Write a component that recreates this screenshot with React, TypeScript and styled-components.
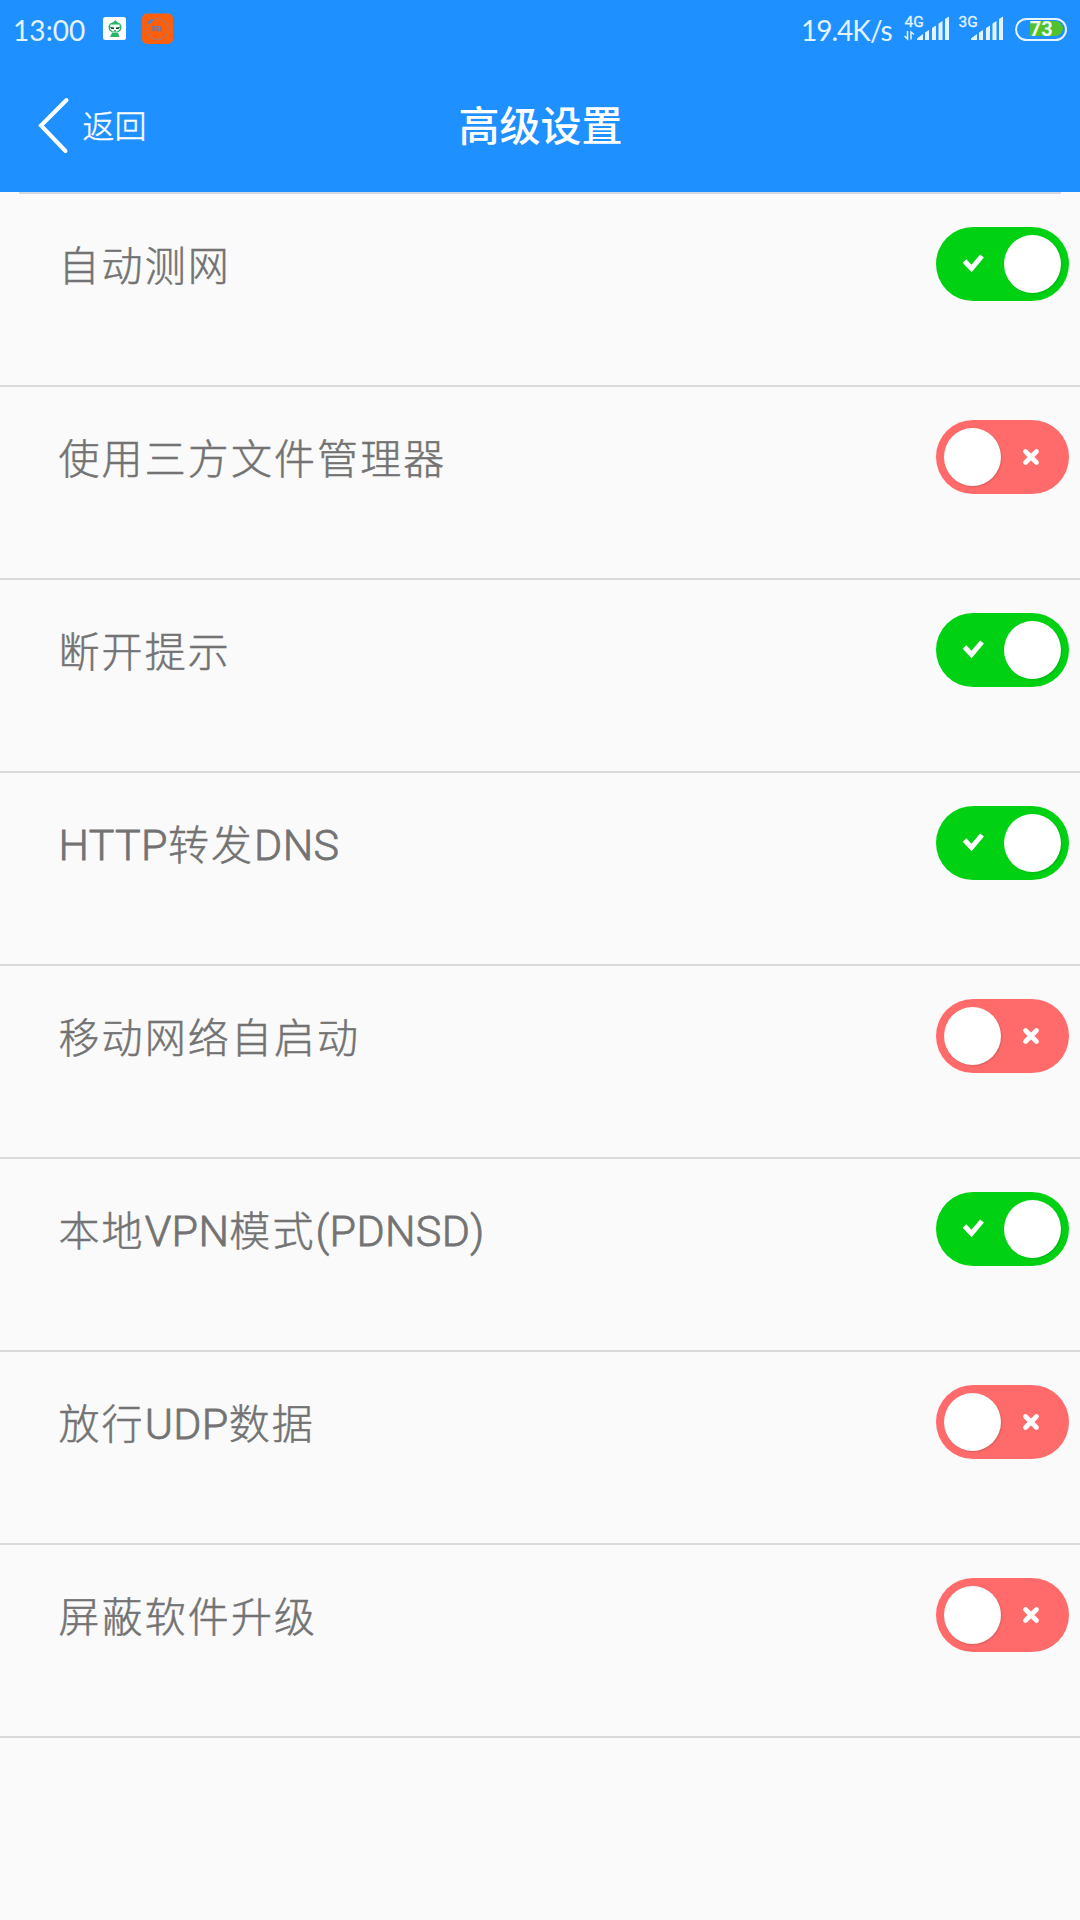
import React, { useState } from "react";
import styled, { createGlobalStyle } from "styled-components";

const GlobalStyle = createGlobalStyle`
  * { box-sizing: border-box; }
  body {
    margin: 0;
    background: #fafafa;
    font-family: Roboto, "Noto Sans CJK SC", sans-serif;
  }
`;

const Screen = styled.div`
  width: 1080px;
  height: 1920px;
  display: flex;
  flex-direction: column;
  background: #fafafa;
  overflow: hidden;
`;

const TopArea = styled.header`
  height: 192px;
  background: #1f90ff;
  color: #fff;
`;

const StatusBar = styled.div`
  height: 60px;
  display: flex;
  justify-content: space-between;
  padding: 0 13px;
`;

const StatusGroup = styled.div`
  display: flex;
  align-items: flex-start;
`;

const AppIcons = styled(StatusGroup)`
  gap: 15px;
`;

const Clock = styled.span`
  width: 75px;
  padding-top: 13px;
  font: 400 28px/34px Lato, sans-serif;
  letter-spacing: 0.1px;
  color: #e3f3ff;
  white-space: nowrap;
`;

const Speed = styled(Clock)`
  width: 103px;
  letter-spacing: -1px;
`;

const StatusIcon = styled.svg`
  display: block;
  flex: none;
`;

const BatteryIcon = styled(StatusIcon)`
  margin-left: 3px;
`;

const NavBar = styled.nav`
  height: 132px;
  display: grid;
  grid-template-columns: 1fr auto 1fr;
  align-items: start;
`;

const BackButton = styled.button`
  display: flex;
  align-items: flex-start;
  padding: 34px 0 0 36px;
  border: 0;
  background: none;
  color: #fff;
  text-align: left;
`;

const BackLabel = styled.span`
  padding: 10px 0 0 12.5px;
  font: 300 32px/40px "Noto Sans CJK SC", sans-serif;
  -webkit-text-stroke: 0.4px currentColor;
`;

const Title = styled.h1`
  margin: 0;
  padding: 36px 0 0 1px;
  font: 500 41px/54px "Noto Sans CJK SC", sans-serif;
`;

const HeaderRule = styled.hr`
  flex: none;
  width: 1042px;
  height: 2px;
  margin: 0 auto;
  border: 0;
  background: #d2d9e2;
`;

const List = styled.ul`
  margin: 0;
  padding: 0;
  list-style: none;
`;

const Row = styled.li`
  height: 193px;
  display: flex;
  justify-content: space-between;
  align-items: flex-start;
  padding: 33px 11px 0 58.5px;
  border-bottom: 2px solid #dadada;
`;

const Label = styled.div`
  padding-top: 9px;
  font: 300 43px/60px Roboto, sans-serif;
  color: #737373;
  white-space: pre;
`;

const Run = styled.span<{ $han: boolean }>`
  font-family: ${(p) => (p.$han ? '"Noto Sans CJK SC"' : "Roboto")}, sans-serif;
  font-size: ${(p) => (p.$han ? 41 : 43)}px;
  line-height: 1;
  letter-spacing: ${(p) => (p.$han ? 2.1 : 0.35)}px;
  -webkit-text-stroke: ${(p) => (p.$han ? 0.5 : 0.8)}px currentColor;
`;

const Toggle = styled.button<{ $on: boolean }>`
  width: 133px;
  height: 74px;
  display: flex;
  flex-direction: ${(p) => (p.$on ? "row" : "row-reverse")};
  align-items: center;
  justify-content: space-between;
  padding: ${(p) => (p.$on ? "0 8px 0 26px" : "0 29px 0 8px")};
  border: 0;
  border-radius: 37px;
  background: ${(p) => (p.$on ? "#00d213" : "#ff6b6b")};
`;

const Knob = styled.span`
  width: 57px;
  height: 58px;
  border-radius: 50%;
  background: #fff;
  box-shadow: 1px 1px 2px rgba(0, 0, 0, 0.14);
`;

const settings = [
  { text: "自动测网", on: true },
  { text: "使用三方文件管理器", on: false },
  { text: "断开提示", on: true },
  { text: "HTTP转发DNS", on: true },
  { text: "移动网络自启动", on: false },
  { text: "本地VPN模式(PDNSD)", on: true },
  { text: "放行UDP数据", on: false },
  { text: "屏蔽软件升级", on: false },
];

const Check = () => (
  <svg width="24" height="24" viewBox="0 0 24 24" fill="none">
    <path d="M2.500 9 L9.500 16.500 L20 4" stroke="#fff" strokeWidth="5" />
  </svg>
);

const Cross = () => (
  <svg width="18" height="18" viewBox="0 0 18 18" fill="none">
    <path d="M3.500 3.500 L14.500 14.500 M14.500 3.500 L3.500 14.500" stroke="#fff" strokeWidth="4.700" strokeLinecap="round" />
  </svg>
);

const GhostApp = () => (
  <StatusIcon width="24" height="60" viewBox="0 0 24 60">
    <rect x="0" y="17" width="23" height="23" rx="2.500" fill="#fff" />
    <path d="M12.500 20 L14 22 L17 23.500 L18.500 26 L18 30 L15 32.500 H9 L6 30 L5.500 26 L7 23.500 L10.500 22 Z" fill="#25b66a" />
    <path d="M7.500 24.500 H16.500 L17 29 L14.500 31.500 H9.500 L7 29 Z" fill="#eefff4" />
    <path d="M7 27 L11 27.500 V29 H8.500 Z M17 27 L13 27.500 V29 H15.500 Z M11.500 30 H12.500 V31.500 H11.500 Z" fill="#153d2b" />
    <path d="M9 33 H15 L16.500 37 H7 Z" fill="#25b66a" />
  </StatusIcon>
);

const OrangeApp = () => (
  <StatusIcon width="32" height="60" viewBox="0 0 32 60">
    <rect x="0" y="13.500" width="31" height="30.500" rx="5" fill="#ff5f0a" />
    <circle cx="15.500" cy="29" r="10.500" fill="none" stroke="#a77774" strokeWidth="1.300" strokeDasharray="3 1.200" />
    <path d="M6 23.500 L10.500 19.500" stroke="#5d82bd" strokeWidth="3" />
    <path d="M11 26 V31.500 M13.500 26 V31.500 M16 26 V31.500 M19 26 V31.500" stroke="#75789c" strokeWidth="1.700" />
    <path d="M10.500 26.500 H17 M10.500 29 H17" stroke="#75789c" strokeWidth="1" />
  </StatusIcon>
);

const Signal = ({ name, arrows }: { name: string; arrows?: boolean }) => (
  <StatusIcon width="54" height="60" viewBox="0 0 54 60" fill="#e3f3ff">
    <text x="0.500" y="26.500" fontFamily="Roboto, sans-serif" fontSize="15.500" fontWeight="400" stroke="#e3f3ff" strokeWidth="0.300">
      {name}
    </text>
    <path d="M13 40 V38.500 L19 34 V40 Z" />
    <path d="M21 32.500 L25 30 V40 H21 Z M28 28 L32 25.500 V40 H28 Z M34.500 23.500 L38.500 21 V40 H34.500 Z M41 19 L45 16.500 V40 H41 Z" />
    {arrows && (
      <path d="M3.500 31 V39 L0.500 36 M7 39.500 V32 L10 34.500" fill="none" stroke="#e3f3ff" strokeWidth="1.500" />
    )}
  </StatusIcon>
);

const Battery = () => (
  <BatteryIcon width="52" height="60" viewBox="0 0 52 60">
    <path d="M15 21 H40 A8 7.500 0 0 1 40 36 H15 Z" fill="#53c02d" />
    <rect x="1" y="19" width="50" height="21" rx="10.500" fill="none" stroke="#e3f3ff" strokeWidth="2" />
    <text x="26.300" y="35.500" textAnchor="middle" fill="#effff0" fontFamily="Roboto, sans-serif" fontSize="20" fontWeight="700">
      73
    </text>
  </BatteryIcon>
);

const splitRuns = (text: string) => text.match(/[\u4e00-\u9fff]+|[^\u4e00-\u9fff]+/g) ?? [];

function Setting({ text, initial }: { text: string; initial: boolean }) {
  const [on, setOn] = useState(initial);
  return (
    <Row>
      <Label>
        {splitRuns(text).map((run, i) => (
          <Run key={i} $han={/[\u4e00-\u9fff]/.test(run)}>
            {run}
          </Run>
        ))}
      </Label>
      <Toggle $on={on} role="switch" aria-checked={on} onClick={() => setOn(!on)}>
        {on ? <Check /> : <Cross />}
        <Knob />
      </Toggle>
    </Row>
  );
}

export default function App() {
  return (
    <Screen>
      <GlobalStyle />
      <TopArea>
        <StatusBar>
          <AppIcons>
            <Clock>13:00</Clock>
            <GhostApp />
            <OrangeApp />
          </AppIcons>
          <StatusGroup>
            <Speed>19.4K/s</Speed>
            <Signal name="4G" arrows />
            <Signal name="3G" />
            <Battery />
          </StatusGroup>
        </StatusBar>
        <NavBar>
          <BackButton>
            <svg width="34" height="62" viewBox="0 0 34 62" fill="none">
              <path d="M30.500 6 L5 31.500 L29.500 57" stroke="#fff" strokeWidth="4" strokeLinecap="round" />
            </svg>
            <BackLabel>返回</BackLabel>
          </BackButton>
          <Title>高级设置</Title>
        </NavBar>
      </TopArea>
      <HeaderRule />
      <List>
        {settings.map((s) => (
          <Setting key={s.text} text={s.text} initial={s.on} />
        ))}
      </List>
    </Screen>
  );
}
